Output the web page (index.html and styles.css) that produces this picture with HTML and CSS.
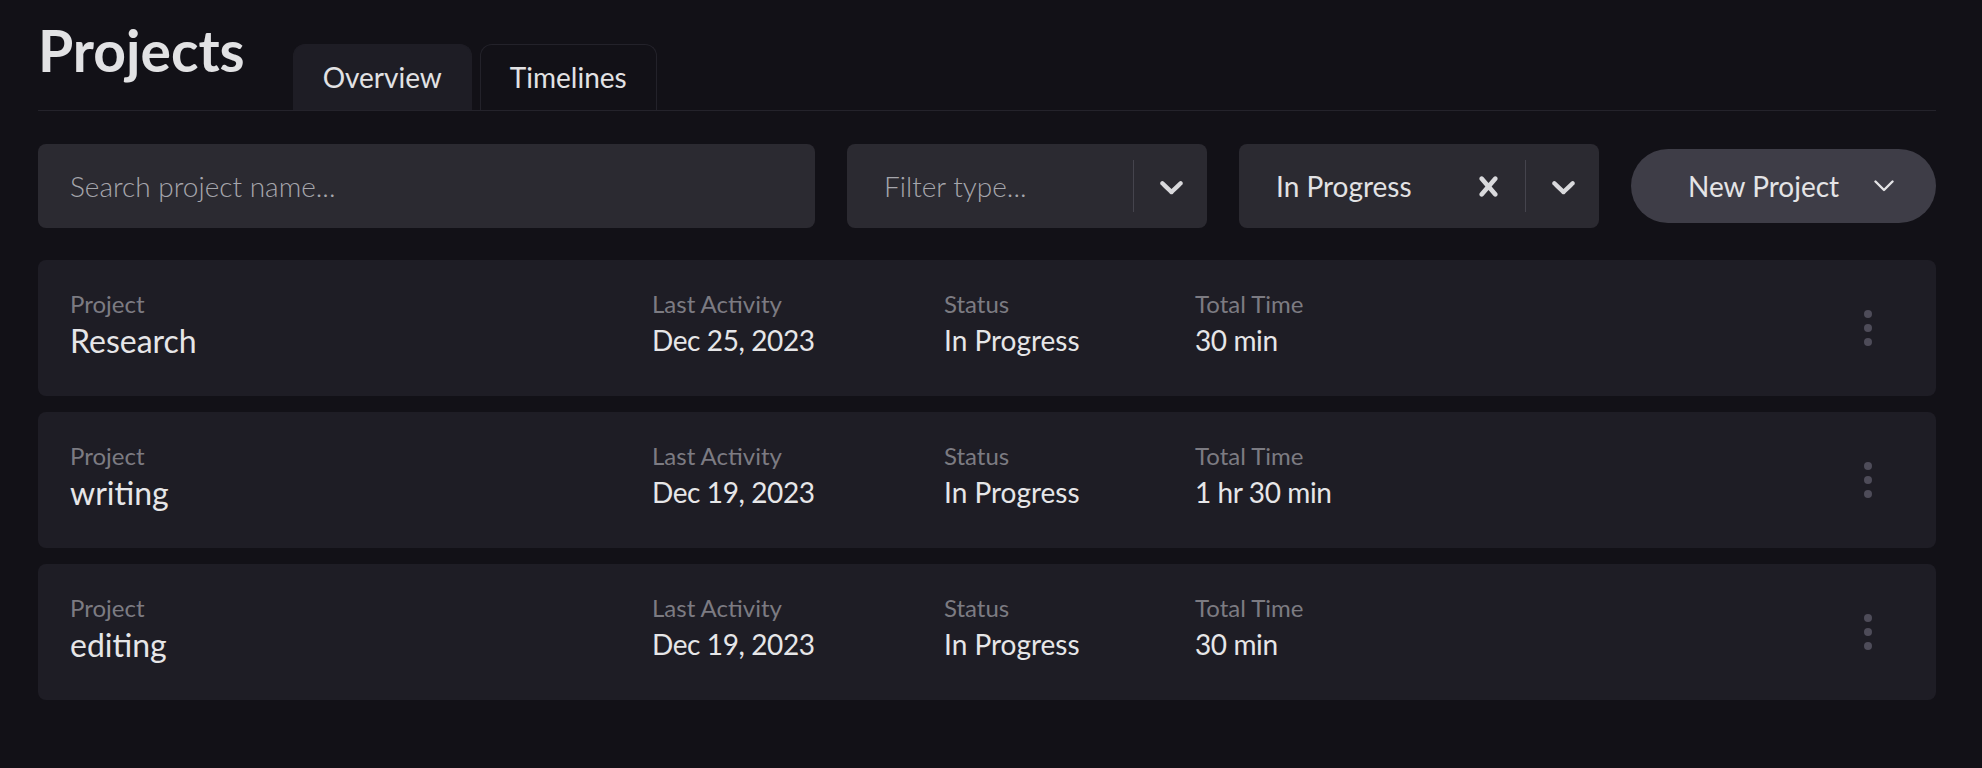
FILE: index.html
```html
<!DOCTYPE html>
<html lang="en">
<head>
<meta charset="utf-8">
<title>Projects</title>
<link rel="stylesheet" href="styles.css">
</head>
<body>
<div class="page">
  <header class="header">
    <h1 class="title">Projects</h1>
    <nav class="tabs">
      <div class="tab tab-active">Overview</div>
      <div class="tab">Timelines</div>
    </nav>
  </header>

  <div class="toolbar">
    <div class="search">Search project name...</div>
    <div class="select">
      <div class="select-value placeholder">Filter type...</div>
      <span class="sep"></span>
      <svg class="ind chev" viewBox="0 0 20 20"><path d="M4.516 7.548c0.436-0.446 1.043-0.481 1.576 0l3.908 3.747 3.908-3.747c0.533-0.481 1.141-0.446 1.574 0 0.436 0.445 0.408 1.197 0 1.615-0.406 0.418-4.695 4.502-4.695 4.502-0.217 0.223-0.502 0.335-0.787 0.335s-0.57-0.112-0.789-0.335c0 0-4.287-4.084-4.695-4.502s-0.436-1.170 0-1.615z"/></svg>
    </div>
    <div class="select">
      <div class="select-value">In Progress</div>
      <svg class="ind cross" viewBox="0 0 20 20"><path d="M14.348 14.849c-0.469 0.469-1.229 0.469-1.697 0l-2.651-3.030-2.651 3.029c-0.469 0.469-1.229 0.469-1.697 0-0.469-0.469-0.469-1.229 0-1.697l2.758-3.15-2.759-3.152c-0.469-0.469-0.469-1.228 0-1.697s1.228-0.469 1.697 0l2.652 3.031 2.651-3.031c0.469-0.469 1.228-0.469 1.697 0s0.469 1.229 0 1.697l-2.758 3.152 2.758 3.15c0.469 0.469 0.469 1.229 0 1.698z"/></svg>
      <span class="sep"></span>
      <svg class="ind chev" viewBox="0 0 20 20"><path d="M4.516 7.548c0.436-0.446 1.043-0.481 1.576 0l3.908 3.747 3.908-3.747c0.533-0.481 1.141-0.446 1.574 0 0.436 0.445 0.408 1.197 0 1.615-0.406 0.418-4.695 4.502-4.695 4.502-0.217 0.223-0.502 0.335-0.787 0.335s-0.57-0.112-0.789-0.335c0 0-4.287-4.084-4.695-4.502s-0.436-1.170 0-1.615z"/></svg>
    </div>
    <button class="btn">
      <span>New Project</span>
      <svg class="btn-chev" viewBox="0 0 20 12"><polyline points="1.5,1.5 10,10 18.5,1.5"/></svg>
    </button>
  </div>

  <div class="rows">
    <div class="row">
      <div class="cell"><div class="label">Project</div><div class="value big">Research</div></div>
      <div class="cell"><div class="label">Last Activity</div><div class="value num">Dec 25, 2023</div></div>
      <div class="cell"><div class="label">Status</div><div class="value">In Progress</div></div>
      <div class="cell"><div class="label">Total Time</div><div class="value num">30 min</div></div>
      <svg class="dots" viewBox="0 0 8 36"><circle cx="4" cy="4" r="4"/><circle cx="4" cy="18" r="4"/><circle cx="4" cy="32" r="4"/></svg>
    </div>
    <div class="row">
      <div class="cell"><div class="label">Project</div><div class="value big">writing</div></div>
      <div class="cell"><div class="label">Last Activity</div><div class="value num">Dec 19, 2023</div></div>
      <div class="cell"><div class="label">Status</div><div class="value">In Progress</div></div>
      <div class="cell"><div class="label">Total Time</div><div class="value num">1 hr 30 min</div></div>
      <svg class="dots" viewBox="0 0 8 36"><circle cx="4" cy="4" r="4"/><circle cx="4" cy="18" r="4"/><circle cx="4" cy="32" r="4"/></svg>
    </div>
    <div class="row">
      <div class="cell"><div class="label">Project</div><div class="value big">editing</div></div>
      <div class="cell"><div class="label">Last Activity</div><div class="value num">Dec 19, 2023</div></div>
      <div class="cell"><div class="label">Status</div><div class="value">In Progress</div></div>
      <div class="cell"><div class="label">Total Time</div><div class="value num">30 min</div></div>
      <svg class="dots" viewBox="0 0 8 36"><circle cx="4" cy="4" r="4"/><circle cx="4" cy="18" r="4"/><circle cx="4" cy="32" r="4"/></svg>
    </div>
  </div>
</div>
</body>
</html>
```

FILE: styles.css
```css
* { box-sizing: border-box; }

body {
  margin: 0;
  background: #121117;
  color: #e4e4e6;
  font-family: Lato, "Noto Sans", sans-serif;
}

.page {
  padding: 0 46px 0 38px;
}

.header {
  display: flex;
  align-items: flex-end;
  height: 111px;
  border-bottom: 1px solid #24232b;
}

.title {
  align-self: flex-start;
  margin: 17px 48px 0 0;
  font-size: 57px;
  font-weight: 700;
  line-height: 67px;
  color: #e2e2e4;
}

.tabs {
  display: flex;
  gap: 8px;
}

.tab {
  height: 66px;
  padding: 0 29px 2px;
  display: flex;
  align-items: center;
  font-size: 28px;
  color: #e2e2e4;
  border: 1px solid #23222a;
  border-bottom: none;
  border-radius: 12px 12px 0 0;
}

.tab-active {
  background: #1e1d25;
  border-color: #1e1d25;
}

.toolbar {
  display: flex;
  align-items: center;
  gap: 32px;
  margin-top: 33px;
  height: 84px;
}

.search {
  flex: 1;
  height: 84px;
  background: #2b2a31;
  border-radius: 8px;
  padding-left: 32px;
  display: flex;
  align-items: center;
  font-size: 28px;
  font-weight: 300;
  color: #a6a6ac;
}

.select {
  width: 360px;
  height: 84px;
  background: #2b2a31;
  border-radius: 8px;
  padding: 0 16px 0 37px;
  display: flex;
  align-items: center;
  font-size: 28px;
  color: #e2e2e4;
}

.select-value {
  flex: 1;
}

.placeholder {
  font-weight: 300;
  color: #a6a6ac;
}

.sep {
  width: 1px;
  height: 52px;
  background: #45444d;
}

.ind {
  width: 39px;
  height: 39px;
  fill: #d9d9dc;
}

.chev {
  margin-left: 18px;
}

.cross {
  margin-right: 17px;
}

.btn {
  width: 305px;
  height: 74px;
  border: none;
  border-radius: 37px;
  background: #3e3d47;
  padding: 0 0 0 57px;
  display: flex;
  align-items: center;
  gap: 35px;
  font-family: Lato, "Noto Sans", sans-serif;
  font-size: 28px;
  color: #e4e4e6;
}

.btn-chev {
  width: 20px;
  height: 12px;
  fill: none;
  stroke: #e4e4e6;
  stroke-width: 2.4;
  stroke-linecap: round;
  stroke-linejoin: round;
}

.rows {
  margin-top: 32px;
  display: flex;
  flex-direction: column;
  gap: 16px;
}

.row {
  height: 136px;
  background: #1e1d25;
  border-radius: 8px;
  padding: 29px 0 0 32px;
  display: grid;
  grid-template-columns: 582px 292px 251px 1fr auto;
  align-items: start;
}

.label {
  font-size: 24px;
  line-height: 29px;
  color: #7c7b82;
}

.value {
  margin-top: 5px;
  font-size: 28px;
  line-height: 34px;
  color: #e6e6e8;
}

.value.num {
  letter-spacing: -0.4px;
}

.value.big {
  font-size: 32px;
  line-height: 38px;
  margin-top: 4px;
}

.dots {
  width: 8px;
  height: 36px;
  fill: #4e4c59;
  align-self: center;
  margin: -29px 64px 0 0;
}
```
